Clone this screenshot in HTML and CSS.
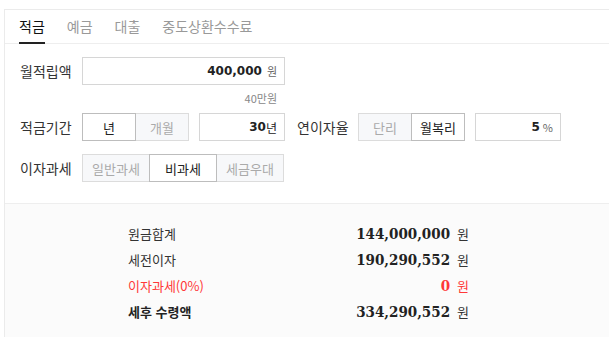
FILE: index.html
```
<!DOCTYPE html>
<html lang="ko">
<head>
<meta charset="utf-8">
<link rel="stylesheet" href="styles.css">
</head>
<body>
<div class="calc">
  <div class="tabs">
    <div class="tab active">적금</div>
    <div class="tab">예금</div>
    <div class="tab">대출</div>
    <div class="tab">중도상환수수료</div>
  </div>
  <div class="form">
    <div class="row">
      <div class="label">월적립액</div>
      <div class="field w-wide"><span class="num">400,000</span><span class="unit">원</span></div>
    </div>
    <div class="hint">40만원</div>
    <div class="row">
      <div class="label">적금기간</div>
      <div class="seg">
        <div class="btn on w54">년</div>
        <div class="btn w54">개월</div>
      </div>
      <div class="field w-short"><span class="num">30</span><span class="unit-dark">년</span></div>
      <div class="label label-mid">연이자율</div>
      <div class="seg">
        <div class="btn w54">단리</div>
        <div class="btn on w54">월복리</div>
      </div>
      <div class="field w-short"><span class="num">5</span><span class="unit pct">%</span></div>
    </div>
    <div class="row row3">
      <div class="label">이자과세</div>
      <div class="seg">
        <div class="btn w68">일반과세</div>
        <div class="btn on w68">비과세</div>
        <div class="btn w68">세금우대</div>
      </div>
    </div>
  </div>
  <div class="result">
    <div class="res-row">
      <div class="res-label">원금합계</div>
      <div class="res-val"><span class="amt">144,000,000</span><span class="won">원</span></div>
    </div>
    <div class="res-row">
      <div class="res-label">세전이자</div>
      <div class="res-val"><span class="amt">190,290,552</span><span class="won">원</span></div>
    </div>
    <div class="res-row red">
      <div class="res-label">이자과세(0%)</div>
      <div class="res-val"><span class="amt">0</span><span class="won">원</span></div>
    </div>
    <div class="res-row total">
      <div class="res-label">세후 수령액</div>
      <div class="res-val"><span class="amt">334,290,552</span><span class="won">원</span></div>
    </div>
  </div>
</div>
</body>
</html>
```
FILE: styles.css
```
html, body {
  margin: 0;
  padding: 0;
  background: #fff;
}
body {
  font-family: "Noto Sans CJK KR", "Noto Sans", sans-serif;
  font-size: 13px;
  color: #333;
}
.calc {
  margin: 9px 0 0 4px;
  border-top: 1px solid #ebebeb;
  border-left: 1px solid #ebebeb;
}
.tabs {
  display: flex;
  gap: 22px;
  padding-left: 14px;
  height: 33px;
  border-bottom: 1px solid #eeeeee;
}
.tab {
  height: 32px;
  display: flex;
  align-items: center;
  color: #999;
  font-size: 14px;
  border-bottom: 2px solid transparent;
}
.tab.active {
  color: #111;
  border-bottom-color: #222;
}
.form {
  padding: 13px 0 21px 15px;
  border-bottom: 1px solid #eeeeee;
}
.row {
  display: flex;
  align-items: center;
  height: 28px;
}
.row3 {
  margin-top: 13px;
}
.label {
  width: 62px;
  color: #333;
  font-size: 14px;
}
.label-mid {
  width: 61px;
  margin-left: 12px;
}
.field {
  box-sizing: border-box;
  height: 28px;
  border: 1px solid #d6d6d6;
  background: #fff;
  display: flex;
  align-items: center;
  justify-content: flex-end;
  padding-right: 7px;
}
.w-wide { width: 203px; }
.w-short { width: 86px; margin-left: 10px; }
.num {
  font-family: "DejaVu Sans", sans-serif;
  font-weight: bold;
  font-size: 12px;
  color: #222;
}
.unit {
  font-size: 11px;
  color: #666;
  margin-left: 5px;
}
.unit.pct {
  margin-left: 3px;
  font-size: 11px;
}
.unit-dark {
  font-size: 12px;
  color: #222;
}
.hint {
  width: 257px;
  height: 28px;
  line-height: 26px;
  text-align: right;
  font-size: 11px;
  color: #888;
}
.seg {
  display: flex;
}
.btn {
  box-sizing: border-box;
  height: 28px;
  border: 1px solid #dcdcdc;
  background: #f7f8fa;
  color: #aaa;
  display: flex;
  align-items: center;
  justify-content: center;
  font-size: 13px;
}
.btn + .btn { margin-left: -1px; }
.btn.on {
  background: #fff;
  color: #222;
  border-color: #bdbdbd;
  position: relative;
  z-index: 1;
}
.w54 { width: 54px; }
.w68 { width: 68px; }
.result {
  background: #fbfbfb;
  padding: 16px 0 13px 123px;
}
.res-row {
  display: flex;
  align-items: center;
  justify-content: space-between;
  width: 341px;
  height: 26px;
  color: #333;
}
.res-label {
  font-size: 13px;
}
.res-val {
  display: flex;
  align-items: baseline;
}
.amt {
  font-family: "DejaVu Serif", serif;
  font-stretch: condensed;
  font-weight: bold;
  font-size: 15px;
  color: #222;
}
.won {
  font-size: 13px;
  margin-left: 7px;
  color: #333;
}
.red .res-label, .red .amt, .red .won {
  color: #ff3838;
}
.total .res-label {
  font-weight: bold;
  color: #222;
}
```
